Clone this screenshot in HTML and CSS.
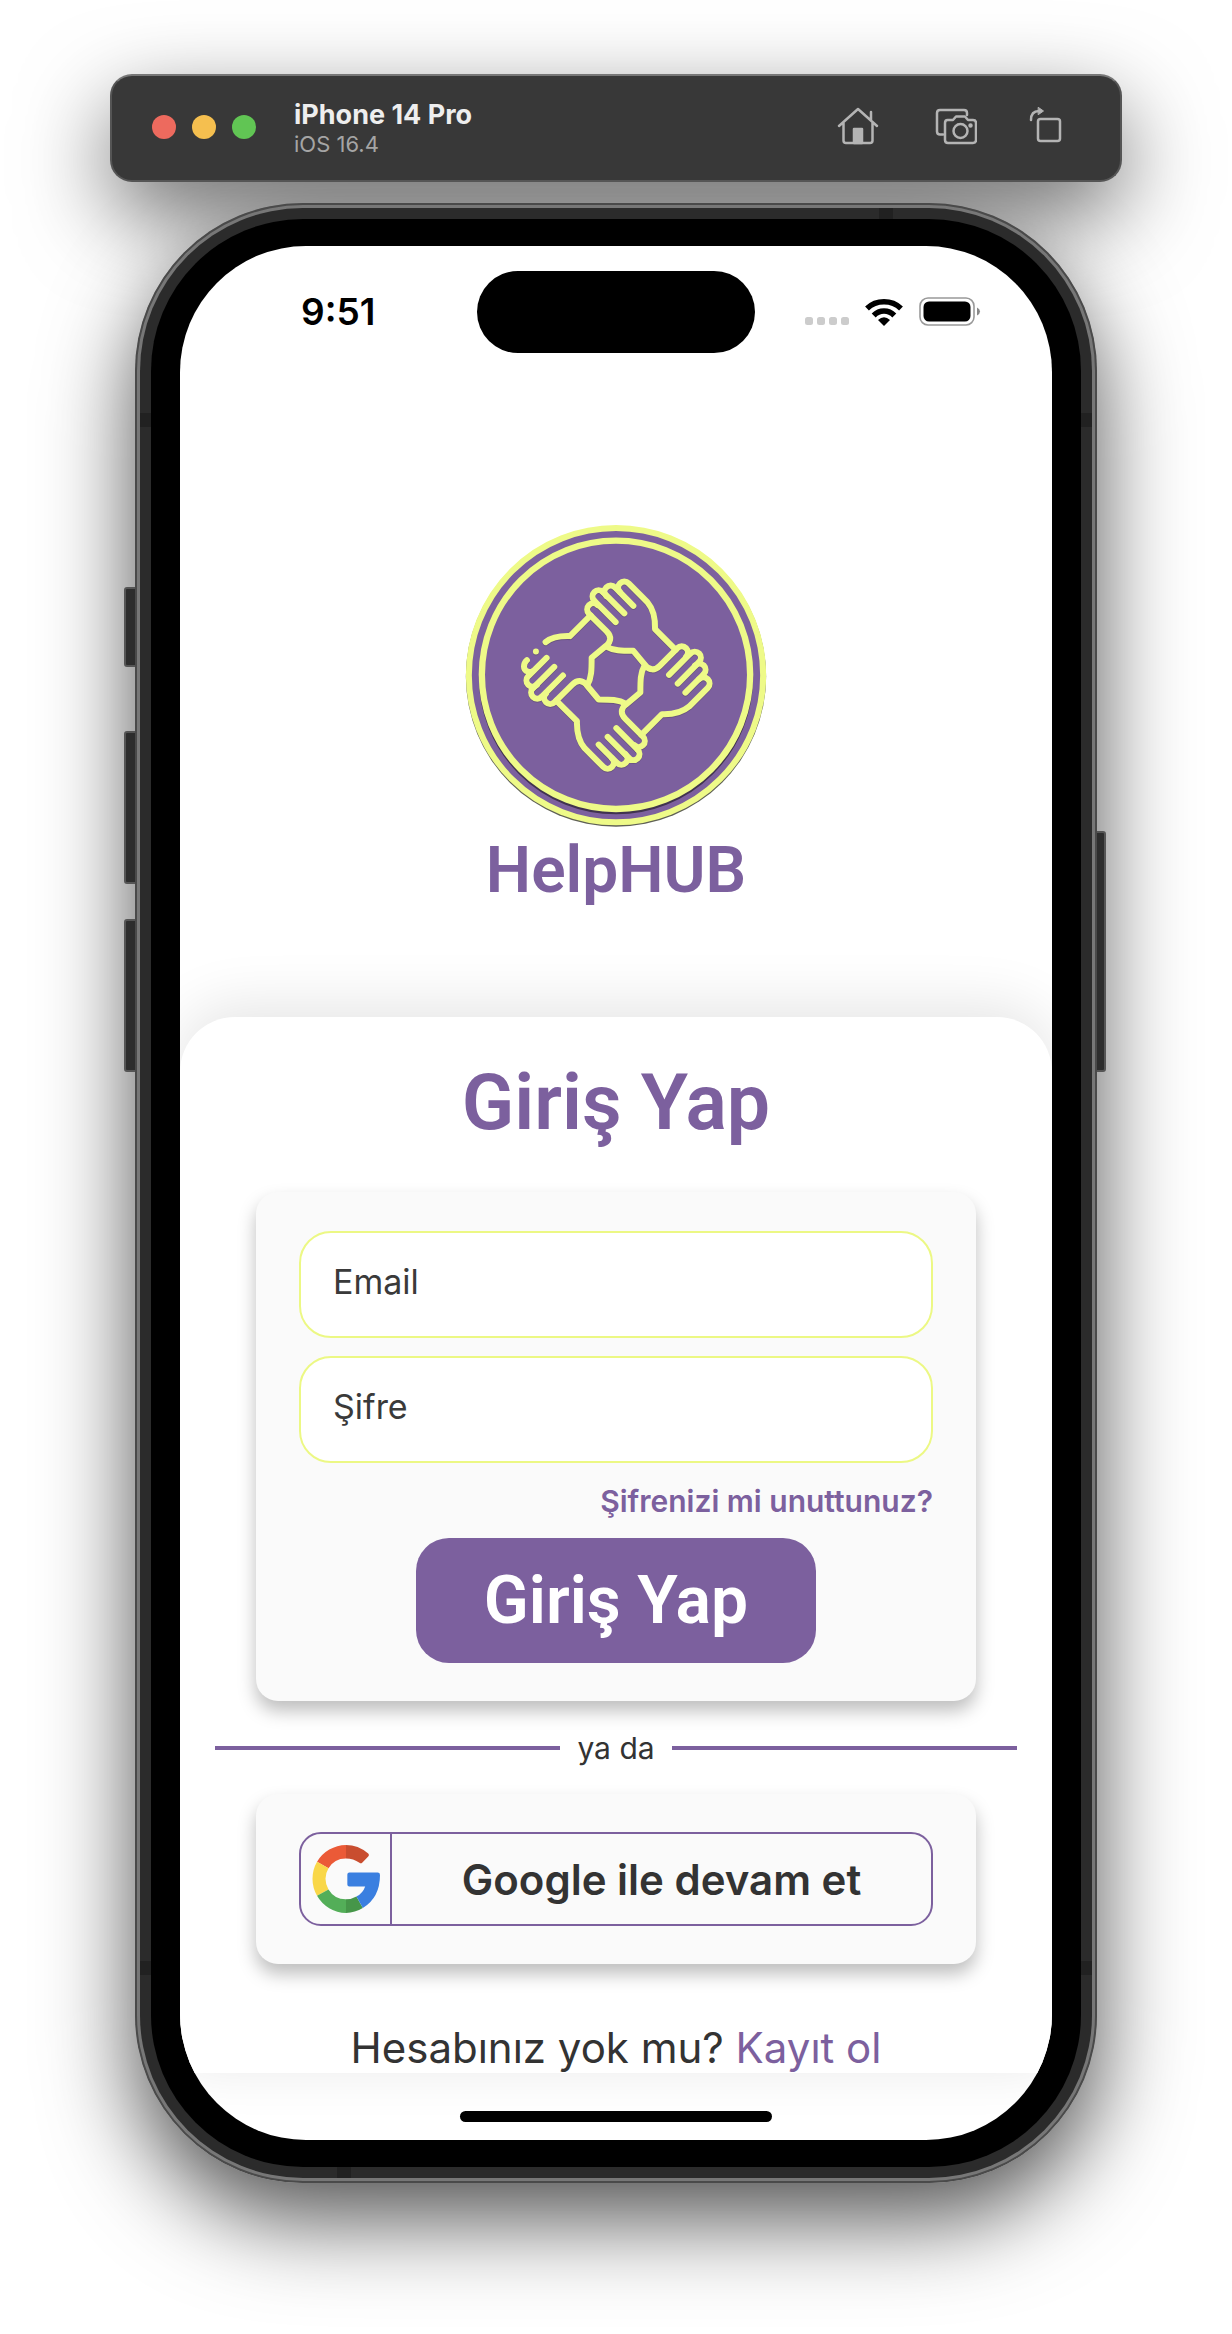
FILE: index.html
```html
<!DOCTYPE html>
<html lang="tr">
<head>
<meta charset="utf-8">
<meta name="viewport" content="width=device-width, initial-scale=1">
<title>HelpHUB</title>
<link rel="stylesheet" href="styles.css">
</head>
<body>
<div class="stage">
  <header class="toolbar">
    <div class="lights">
      <span class="light light-red"></span>
      <span class="light light-yellow"></span>
      <span class="light light-green"></span>
    </div>
    <div class="device">
      <div class="device-name">iPhone 14 Pro</div>
      <div class="device-os">iOS 16.4</div>
    </div>
    <div class="tools">
      <button class="tool" type="button" aria-label="Home">
        <svg width="42" height="42" viewBox="0 0 42 42" fill="none" stroke="currentColor" stroke-width="2.500" stroke-linecap="round" stroke-linejoin="round"><path d="M2 20 21 3l19 17M34 14V6M6.500 17v17.500q0 2.500 2.500 2.500h24q2.500 0 2.500-2.500V17"/><path d="M17 23h8v14h-8z" fill="currentColor"/></svg>
      </button>
      <button class="tool" type="button" aria-label="Screenshot">
        <svg width="42" height="42" viewBox="0 0 42 42" fill="none" stroke="currentColor" stroke-width="2.500" stroke-linecap="round" stroke-linejoin="round"><path d="M8 28.500H5Q2 28.500 2 25.500V7Q2 4 5 4h24q3 0 3 3v2"/><path d="M12.500 14H18l3-3.500h9L33 14h5q3 0 3 3v17q0 3-3 3H13q-3 0-3-3V17q0-3 2.500-3z"/><circle cx="25.500" cy="25" r="7"/><circle cx="35.500" cy="19.500" r="1" fill="currentColor"/></svg>
      </button>
      <button class="tool" type="button" aria-label="Rotate">
        <svg width="42" height="42" viewBox="0 0 42 42" fill="none" stroke="currentColor" stroke-width="2.500" stroke-linecap="round" stroke-linejoin="round"><rect x="9" y="13" width="22" height="22" rx="2.500"/><path d="M2 14q0-9 8-9"/><path d="M9.500 1.500 14.500 5l-5 3.500z" fill="currentColor" stroke-width="1"/></svg>
      </button>
    </div>
  </header>

  <div class="phone">
    <span class="key key-mute"></span>
    <span class="key key-up"></span>
    <span class="key key-down"></span>
    <span class="key key-power"></span>
    <div class="frame">
      <span class="band band-top"></span>
      <span class="band band-bottom"></span>
      <span class="band band-left-top"></span>
      <span class="band band-left-bottom"></span>
      <span class="band band-right-top"></span>
      <span class="band band-right-bottom"></span>
      <div class="bezel">
        <div class="screen">
          <div class="status">
            <div class="clock">9:51</div>
            <div class="island"></div>
            <div class="signals">
              <svg width="44" height="28" viewBox="0 0 44 28" fill="#ccc"><rect y="19" width="8" height="8" rx="2.500"/><rect x="12" y="19" width="8" height="8" rx="2.500"/><rect x="24" y="19" width="8" height="8" rx="2.500"/><rect x="36" y="19" width="8" height="8" rx="2.500"/></svg>
              <svg width="38" height="28" viewBox="0 0 38 28" fill="none" stroke="#000" stroke-width="5.500"><path d="M2 10.500Q9 3.800 19 3.800T36 10.500"/><path d="M8.700 17.500Q13 13 19 13t10.300 4.500"/><path d="M13 22q6-5.500 12 0l-6 6z" fill="#000" stroke="none"/></svg>
              <svg width="62" height="30" viewBox="0 0 62 30"><rect x="1" y="1" width="54" height="27" rx="8" fill="none" stroke="#999" stroke-width="1.600"/><rect x="4.500" y="4.500" width="47" height="20" rx="5.500"/><path d="M58 10.500q3 1.500 3 4t-3 4z" fill="#888"/></svg>
            </div>
          </div>

          <div class="brand">
            <svg class="logo" viewBox="46 43 904 908" fill="none" stroke-linecap="round" stroke-linejoin="round">
              <defs>
                <g id="grip">
                  <path d="M253 93 317 157M280 68 343 131M319 57 370 108"/>
                  <path d="M253 93A18 18 0 0 1 279 67M289 79A18 18 0 0 1 315 53"/>
                  <path d="M263 106A18 18 0 0 0 237 132L290 185C305 200 304 215 288 230C310 243 335 243 370 243L405 285"/>
                </g>
                <path id="back" d="M330 67A18 18 0 0 1 356 41L412 97C430 118 436 145 435 178L497 240"/>
                <g id="hands">
                  <use href="#grip"/><use href="#back"/>
                  <g transform="rotate(90 318 316)"><use href="#grip"/><use href="#back"/></g>
                  <g transform="rotate(180 318 316)"><use href="#grip"/><use href="#back"/></g>
                  <use href="#grip" transform="rotate(270 318 316)"/>
                  <path d="M242 137 180 199C150 198 125 202 107 217M78 245h.1M51 271C40 281 38 300 53 305Q62 309 69 304"/>
                </g>
              </defs>
              <circle cx="498" cy="500" r="450" fill="#5f6055"/>
              <circle cx="498" cy="496" r="441" fill="#7c609e" stroke="#eefa88" stroke-width="18"/>
              <circle cx="498" cy="502" r="402" stroke="#40334f" stroke-width="18"/>
              <circle cx="498" cy="495" r="402" fill="#7c609e" stroke="#eefa88" stroke-width="19"/>
              <use href="#hands" x="180" y="183" stroke="#6a5580" stroke-width="18"/>
              <use href="#hands" x="180" y="180" stroke="#eefa88" stroke-width="18"/>
            </svg>
            <div class="wordmark">HelpHUB</div>
          </div>

          <main class="sheet">
            <h1 class="title">Giriş Yap</h1>
            <form class="card login">
              <input class="field" type="email" placeholder="Email" aria-label="Email">
              <input class="field" type="password" placeholder="Şifre" aria-label="Şifre">
              <a class="forgot" href="#">Şifrenizi mi unuttunuz?</a>
              <button class="submit" type="submit">Giriş Yap</button>
            </form>
            <div class="divider"><span>ya da</span></div>
            <div class="card">
              <button class="google" type="button">
                <span class="google-mark">
                  <svg width="68" height="68" viewBox="336 257 202 202"><path fill="#eb5a37" d="M437 257A101 101 0 0 0 351 307L385 326A60 60 0 0 1 437 297z"/><path fill="#c94d2f" d="M437 257Q473 257 503 282Q507 287 503 291L485 310Q481 313 477 310Q459 297 437 297z"/><path fill="#f9d748" d="M351 307A101 101 0 0 0 351 408L385 389A60 60 0 0 1 385 326z"/><path fill="#53ae58" d="M351 408A101 101 0 0 0 437 459V418A60 60 0 0 1 385 389z"/><path fill="#469649" d="M437 459Q464 458 487 444L468 410Q455 418 437 418z"/><path fill="#3a7fe0" d="M487 444Q538 413 538 346Q538 339 531 339H447Q441 339 441 345V374Q441 380 447 380H494Q487 400 468 410z"/></svg>
                </span>
                <span class="google-text">Google ile devam et</span>
              </button>
            </div>
            <p class="signup">Hesabınız yok mu? <a href="#">Kayıt ol</a></p>
          </main>
          <div class="home-area"><span class="home-bar"></span></div>
        </div>
      </div>
    </div>
  </div>
</div>
</body>
</html>
```
FILE: styles.css
```css
* {
  box-sizing: border-box;
}

body {
  margin: 0;
  background: #fff;
  color: #333;
  font-family: Inter, "Liberation Sans", sans-serif;
}

button {
  font: inherit;
  color: inherit;
  border: 0;
  background: none;
  padding: 0;
}

a {
  color: #7c609e;
  text-decoration: none;
}

.stage {
  isolation: isolate;
  display: flex;
  flex-direction: column;
  align-items: center;
  gap: 21px;
  padding: 74px 16px 151px;
  overflow: hidden;
}

/* simulator toolbar */
.toolbar {
  position: relative;
  display: flex;
  align-items: center;
  width: 100%;
  max-width: 1012px;
  height: 108px;
  padding: 0 49px 2px 40px;
  border: 2px solid #555;
  border-top-color: #777;
  border-radius: 22px;
  background: #383838;
}

/* window shadows sit behind both the toolbar and the handset */
.toolbar::before,
.phone::before {
  content: "";
  position: absolute;
  z-index: -1;
  inset: 0;
  border-radius: inherit;
}

.toolbar::before {
  box-shadow: 0 32px 90px rgba(0, 0, 0, 0.6);
}

.phone::before {
  box-shadow: 0 36px 90px rgba(0, 0, 0, 0.68);
}

.lights {
  display: flex;
  gap: 16px;
}

.light {
  width: 24px;
  height: 24px;
  border-radius: 50%;
}

.light-red {
  background: #ed6a5e;
}

.light-yellow {
  background: #f5bf4f;
}

.light-green {
  background: #61c554;
}

.device {
  margin-left: 38px;
  padding-top: 4px;
}

.device-name {
  color: #eee;
  font-size: 27px;
  font-weight: 700;
  line-height: 30px;
}

.device-os {
  color: #a5a5a5;
  font-size: 22px;
  line-height: 28px;
}

.tools {
  display: flex;
  gap: 56px;
  margin-left: auto;
  color: #b4b4b4;
}

.tool {
  width: 42px;
  height: 42px;
}

.tool:last-child {
  margin-left: -4px;
}

/* handset */
.phone {
  position: relative;
  width: 100%;
  max-width: 962px;
  padding: 5px;
  border-radius: 168px;
  background: #777;
  box-shadow: inset 0 0 0 2px #4a4a4a;
}

.frame {
  position: relative;
  padding: 11px;
  border-radius: 163px;
  background: #2b2b2b;
}

.bezel {
  position: relative;
  padding: 27px 29px;
  border-radius: 152px;
  background: #000;
}

.key {
  position: absolute;
  z-index: -1;
  left: -11px;
  width: 16px;
  border: 2px solid #555;
  border-radius: 3px;
  background: #2d2d2d;
}

.key-mute {
  top: 384px;
  height: 80px;
}

.key-up {
  top: 528px;
  height: 153px;
}

.key-down {
  top: 716px;
  height: 153px;
}

.key-power {
  top: 628px;
  left: auto;
  right: -9px;
  height: 241px;
}

.band {
  position: absolute;
  width: 14px;
  height: 14px;
  background: #212121;
}

.band-top {
  top: 0;
  right: 199px;
}

.band-bottom {
  bottom: 0;
  left: 197px;
}

.band-left-top {
  top: 205px;
  left: 0;
}

.band-right-top {
  top: 205px;
  right: 0;
}

.band-left-bottom {
  bottom: 203px;
  left: 0;
}

.band-right-bottom {
  bottom: 203px;
  right: 0;
}

.screen {
  overflow: hidden;
  border-radius: 126px;
  background: #fff;
}

.status {
  display: grid;
  grid-template-columns: 1fr 278px 1fr;
  align-items: center;
  padding-top: 25px;
}

.clock {
  padding-left: 121px;
  color: #000;
  font-size: 37px;
  font-weight: 600;
  line-height: 40px;
}

.island {
  height: 82px;
  border-radius: 41px;
  background: #000;
}

.signals {
  display: flex;
  align-items: center;
  justify-content: flex-end;
  gap: 16px;
  padding-right: 71px;
}

.brand {
  display: flex;
  flex-direction: column;
  align-items: center;
  padding: 171px 0 102px;
}

.logo {
  width: 302px;
  height: 303px;
}

.wordmark {
  color: #7c609e;
  font-family: Roboto, sans-serif;
  font-size: 64px;
  font-weight: 600;
  line-height: 88px;
}

/* sign-in sheet */
.sheet {
  display: flex;
  flex-direction: column;
  align-items: center;
  padding: 38px 35px 0;
  border-radius: 55px 55px 0 0;
  background: #fff;
  box-shadow: 0 -10px 60px rgba(0, 0, 0, 0.11);
}

.title {
  margin: 0 0 41px;
  color: #7c609e;
  font-family: Roboto, sans-serif;
  font-size: 77px;
  font-weight: 600;
  line-height: 96px;
}

.card {
  width: 100%;
  max-width: 720px;
  padding: 38px 43px;
  border-radius: 22px;
  background: #fafafa;
  box-shadow: 0 10px 18px rgba(0, 0, 0, 0.26);
}

.login {
  display: flex;
  flex-direction: column;
  align-items: center;
  padding-top: 39px;
}

.field {
  width: 100%;
  height: 107px;
  margin-bottom: 18px;
  padding: 0 32px 6px;
  border: 2px solid #ecf884;
  border-radius: 32px;
  background: #fff;
  color: #333;
  font-family: inherit;
  font-size: 34px;
}

.field::placeholder {
  color: #3a3a3a;
  opacity: 1;
}

.forgot {
  align-self: flex-end;
  margin-bottom: 17px;
  font-size: 30px;
  font-weight: 600;
  line-height: 40px;
}

.submit {
  width: 400px;
  height: 125px;
  border-radius: 33px;
  background: #7c609e;
  color: #fff;
  font-family: Roboto, sans-serif;
  font-size: 66px;
  font-weight: 600;
}

.divider {
  display: flex;
  align-items: center;
  gap: 17px;
  width: 100%;
  margin: 27px 0 26px;
  font-size: 30px;
  line-height: 40px;
}

.divider::before,
.divider::after {
  content: "";
  flex: 1;
  height: 4px;
  background: #7c609e;
}

.google {
  display: flex;
  width: 100%;
  height: 94px;
  border: 2px solid #7c609e;
  border-radius: 22px;
  font-size: 42px;
  font-weight: 600;
}

.google-mark {
  display: flex;
  align-items: center;
  height: 100%;
  padding: 0 10px 0 11px;
  border-right: 2px solid #7c609e;
}

.google-text {
  flex: 1;
  align-self: center;
}

.signup {
  margin: 59px 0 0;
  font-size: 42px;
  line-height: 50px;
}

.home-area {
  display: flex;
  justify-content: center;
  padding: 38px 0 18px;
}

.home-bar {
  width: 312px;
  height: 11px;
  border-radius: 6px;
  background: #000;
}
```
